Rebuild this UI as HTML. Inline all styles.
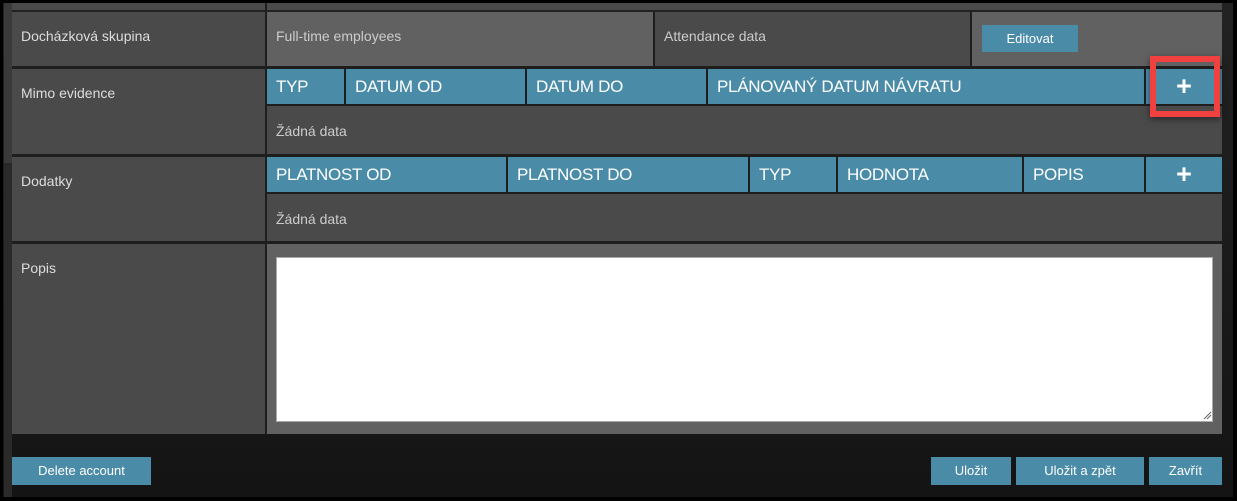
<!DOCTYPE html>
<html><head><meta charset="utf-8"><style>
*{margin:0;padding:0;box-sizing:border-box}
body{width:1237px;height:501px;background:#000;position:relative;overflow:hidden;font-family:"Liberation Sans","DejaVu Sans",sans-serif}
.a{position:absolute}
.bg{left:3px;top:3px;width:1230px;height:494px;background:linear-gradient(#222,#141414)}
.lab{background:#4a4a4a;color:#ddd;font-size:14px;padding:16px 0 0 9px}
.v1{background:#616161;color:#ccc;font-size:14px;padding:16px 0 0 9px}
.v2{background:#4a4a4a;color:#ccc;font-size:14px;padding:16px 0 0 9px}
.h{background:#4a8ba8;color:#fff;font-size:17px;padding:8px 0 0 9px;height:35px;letter-spacing:-0.3px}
.pl{font-size:27px;text-align:center;padding:0;line-height:34px;letter-spacing:0;font-weight:bold}
.nd{background:#4a4a4a;color:#ccc;font-size:14px;padding:17px 0 0 9px}
.btn{background:#4a8ba8;color:#fff;font-size:13px;text-align:center;line-height:28px}
</style></head><body>
<div class="a bg"></div>
<div class="a" style="left:4px;top:3px;width:8px;height:494px;background:#2a2a2a"></div>
<div class="a" style="left:4px;top:3px;width:8px;height:160px;background:#3a3a3a"></div>
<div class="a" style="left:12px;top:3px;width:1210px;height:7px;background:#4a4a4a"></div>
<div class="a" style="left:265px;top:3px;width:2px;height:8px;background:#1e1e1e"></div>
<div class="a" style="left:12px;top:12px;width:1210px;height:422px;background:#1e1e1e"></div>
<div class="a lab" style="left:12px;top:12px;width:253px;height:54px">Docházková skupina</div>
<div class="a v1" style="left:267px;top:12px;width:386px;height:54px">Full-time employees</div>
<div class="a v2" style="left:655px;top:12px;width:315px;height:54px">Attendance data</div>
<div class="a v1" style="left:972px;top:12px;width:250px;height:54px"></div>
<div class="a btn" style="left:982px;top:25px;width:96px;height:27px">Editovat</div>
<div class="a lab" style="left:12px;top:69px;width:253px;height:85px">Mimo evidence</div>
<div class="a h" style="left:267px;top:69px;width:77px">TYP</div>
<div class="a h" style="left:346px;top:69px;width:179px">DATUM OD</div>
<div class="a h" style="left:527px;top:69px;width:179px">DATUM DO</div>
<div class="a h" style="left:708px;top:69px;width:436px">PLÁNOVANÝ DATUM NÁVRATU</div>
<div class="a h pl" style="left:1146px;top:69px;width:76px">+</div>
<div class="a nd" style="left:267px;top:106px;width:955px;height:48px">Žádná data</div>
<div class="a lab" style="left:12px;top:157px;width:253px;height:84px">Dodatky</div>
<div class="a h" style="left:267px;top:157px;width:239px">PLATNOST OD</div>
<div class="a h" style="left:508px;top:157px;width:240px">PLATNOST DO</div>
<div class="a h" style="left:750px;top:157px;width:86px">TYP</div>
<div class="a h" style="left:838px;top:157px;width:184px">HODNOTA</div>
<div class="a h" style="left:1024px;top:157px;width:120px">POPIS</div>
<div class="a h pl" style="left:1146px;top:157px;width:76px">+</div>
<div class="a nd" style="left:267px;top:194px;width:955px;height:47px">Žádná data</div>
<div class="a lab" style="left:12px;top:244px;width:253px;height:190px">Popis</div>
<div class="a" style="left:267px;top:244px;width:955px;height:190px;background:#616161"></div>
<div class="a" style="left:276px;top:257px;width:937px;height:165px;background:#fff;border:1px solid #aaa"></div>
<svg class="a" style="left:1202px;top:410px" width="10" height="10"><path d="M2 9L9 2M5 9L9 5" stroke="#666" stroke-width="1"/></svg>
<div class="a" style="left:1150px;top:56px;width:70px;height:61px;border:6px solid #f04040;box-shadow:0 2px 6px rgba(0,0,0,.5)"></div>
<div class="a btn" style="left:12px;top:457px;width:139px;height:28px">Delete account</div>
<div class="a btn" style="left:931px;top:457px;width:80px;height:28px">Uložit</div>
<div class="a btn" style="left:1016px;top:457px;width:128px;height:28px">Uložit a zpět</div>
<div class="a btn" style="left:1149px;top:457px;width:73px;height:28px">Zavřít</div>
</body></html>
